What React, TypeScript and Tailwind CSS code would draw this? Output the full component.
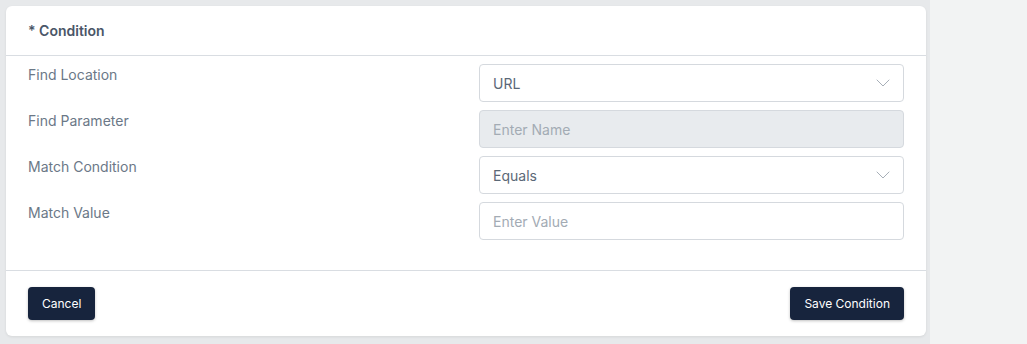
import { ChevronDown } from 'lucide-react';

const font = { fontFamily: 'Inter, "Noto Sans", sans-serif' };

function SelectBox({ value }: { value: string }) {
    return (
        <div className="flex h-[38px] items-center justify-between rounded border border-[#d5d9de] bg-white pl-[13px] pr-[8px] text-[14px] text-[#5b6877]">
            <span>{value}</span>
            <ChevronDown className="h-6 w-6 text-[#a7afb8]" strokeWidth={1} />
        </div>
    );
}

function TextBox({ placeholder, disabled }: { placeholder: string; disabled?: boolean }) {
    return (
        <input
            disabled={disabled}
            placeholder={placeholder}
            className={`h-[38px] w-full rounded border border-[#d5d9de] px-[13px] text-[14px] text-[#5b6877] outline-none placeholder:text-[#a3abb4] ${disabled ? 'bg-[#e8ebee]' : 'bg-white'}`}
            style={font}
        />
    );
}

export default function App() {
    const rows = [
        { label: 'Find Location', field: <SelectBox value="URL" /> },
        { label: 'Find Parameter', field: <TextBox placeholder="Enter Name" disabled /> },
        { label: 'Match Condition', field: <SelectBox value="Equals" /> },
        { label: 'Match Value', field: <TextBox placeholder="Enter Value" /> },
    ];

    return (
        <div className="flex h-[344px] w-full bg-[#f2f3f3]" style={font}>
            <div className="w-[930px] bg-[#e7e9eb] pl-[6px] pr-[4px] pt-[6px] pb-[8px]">
                <div className="flex h-full flex-col rounded-md bg-white shadow-[0_1px_3px_rgba(0,0,0,0.08)]">
                    {/* Header */}
                    <div className="flex h-[50px] items-center border-b border-[#d9dde2] px-[22px]">
                        <h2 className="text-[14px] font-semibold text-[#4a5668]">* Condition</h2>
                    </div>

                    {/* Body */}
                    <div className="flex flex-col gap-2 border-b border-[#d9dde2] px-[22px] pt-[8px] pb-[30px]">
                        {rows.map((row) => (
                            <div key={row.label} className="flex">
                                <div className="w-[451px] pt-[1px] text-[14px] leading-5 text-[#6b7887]">{row.label}</div>
                                <div className="flex-1">{row.field}</div>
                            </div>
                        ))}
                    </div>

                    {/* Footer */}
                    <div className="flex flex-1 items-start justify-between px-[22px] pt-[16px]">
                        <button className="h-[33px] rounded bg-[#17243d] px-[14px] text-[12px] text-white shadow-[0_1px_3px_rgba(0,0,0,0.25)]">
                            Cancel
                        </button>
                        <button className="h-[33px] rounded bg-[#17243d] px-[14px] text-[12px] text-white shadow-[0_1px_3px_rgba(0,0,0,0.25)]">
                            Save Condition
                        </button>
                    </div>
                </div>
            </div>
        </div>
    );
}
